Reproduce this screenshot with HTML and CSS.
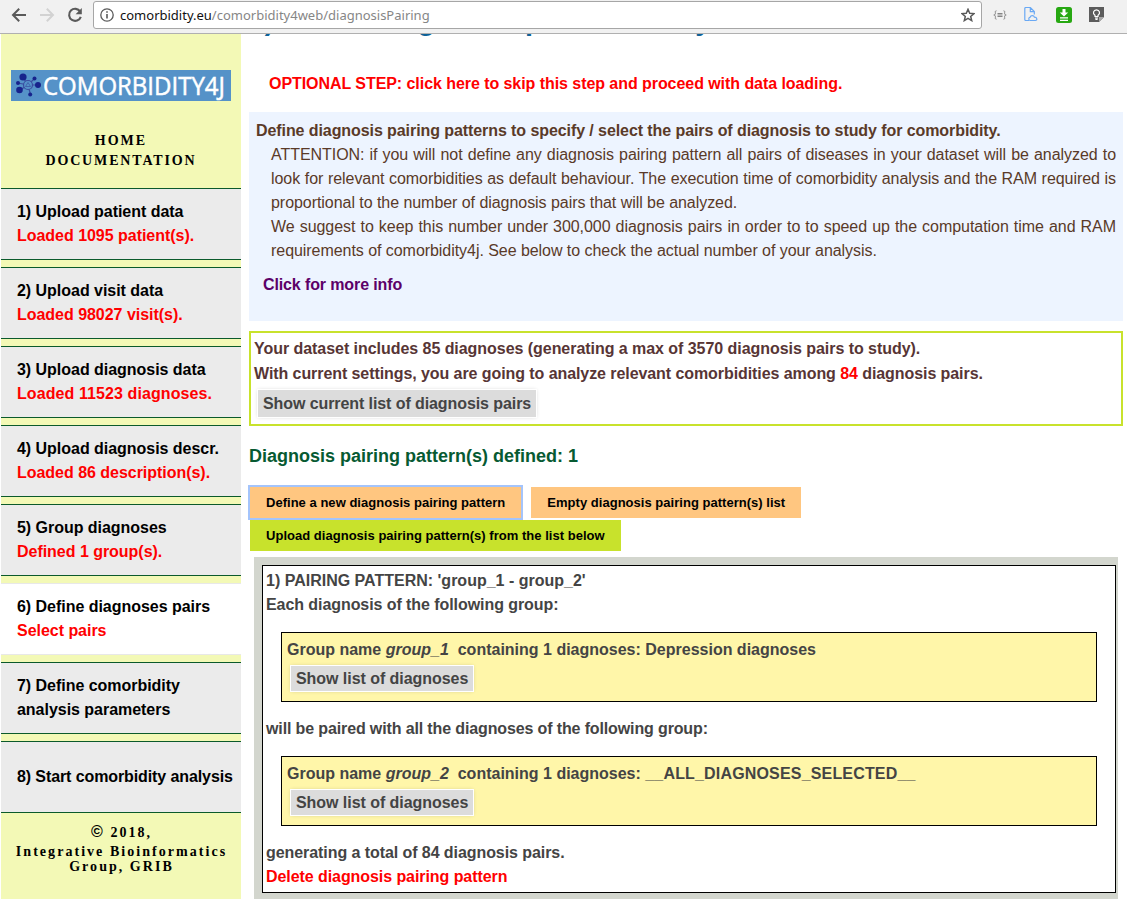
FILE: index.html
```html
<!DOCTYPE html>
<html lang="en">
<head>
<meta charset="utf-8">
<title>Comorbidity4j - Define diagnoses pairs</title>
<link rel="stylesheet" href="styles.css">
</head>
<body>
<header class="browser">
  <svg class="ico-back" width="16" height="16" viewBox="0 0 16 16"><path d="M15 8H2.5M8.2 1.8 2 8l6.200 6.200" fill="none" stroke="#5a5a5a" stroke-width="2"/></svg>
  <svg class="ico-fwd" width="16" height="16" viewBox="0 0 16 16"><path d="M1 8h12.500M7.800 1.800 14 8l-6.200 6.200" fill="none" stroke="#d2d2d2" stroke-width="2"/></svg>
  <svg class="ico-reload" width="16" height="16" viewBox="0 0 16 16"><path d="M13.200 4.600A6 6 0 1 0 13.800 9.800" fill="none" stroke="#5a5a5a" stroke-width="2.100"/><path d="M14.800 1v6.200H8.600z" fill="#5a5a5a"/></svg>
  <div class="address">
    <svg class="ico-info" width="14" height="14" viewBox="0 0 14 14"><circle cx="7" cy="7" r="6.200" fill="none" stroke="#5a5a5a" stroke-width="1.300"/><path d="M6.200 6h1.600v4.500H6.200zM6.200 3.300h1.600v1.500H6.200z" fill="#5a5a5a"/></svg>
    <span class="url"><span class="host">comorbidity.eu</span>/comorbidity4web/diagnosisPairing</span>
    <svg class="ico-star" width="14" height="14" viewBox="0 0 14 14"><path d="M7 1.300 8.700 5.200l4.200.4-3.200 2.800 1 4.200L7 10.400l-3.700 2.200 1-4.200L1.100 5.600l4.200-.4z" fill="none" stroke="#5a5a5a" stroke-width="1.500"/></svg>
  </div>
  <div class="extensions">
    <svg width="14" height="10" viewBox="0 0 14 10"><path d="M3.500.8C1.800.8 2.400 2 2.400 3.200S2 4.900.8 5c1.200.1 1.600.6 1.600 1.800S1.800 9.200 3.500 9.200M10.500.8c1.700 0 1.100 1.200 1.100 2.400s.4 1.700 1.600 1.800c-1.200.1-1.600.6-1.600 1.800s.6 2.400-1.100 2.400M4.500 3.500h5M4.500 5h5M4.500 6.500h5" fill="none" stroke="#858585" stroke-width="1"/></svg>
    <svg width="14" height="15" viewBox="0 0 14 15"><path d="M5 13.500H1.800a1 1 0 0 1-1-1v-11a1 1 0 0 1 1-1h4.500l4 4v3M6.300.8v3.800h3.900M6 13.500a1.700 1.700 0 0 1 .2-3.300c.5-2 3.600-2.200 4.200 0 2.800-.1 3.300 3.300 1 3.300z" fill="none" stroke="#6aa9f4" stroke-width="1.200"/></svg>
    <svg width="16" height="16" viewBox="0 0 16 16"><rect width="16" height="16" rx="2.500" fill="#27a812"/><path d="M6.500 2h3v3.500h2.700L8 9.500 3.800 5.500h2.700zM4 10.200h8v1.300H4zM4 12.700h8V14H4z" fill="#fff"/></svg>
    <svg width="15" height="15" viewBox="0 0 15 15"><path d="M0 0h15v10l-5 5H0z" fill="#5c5c5c"/><path d="M15 10h-5v5z" fill="#a8a8a8"/><path d="M6 8.300C3.200 6.500 4.500 2.800 7.500 2.800s4.300 3.700 1.500 5.500v1.200H6zM6 11h3M6.400 12.400h2.200" fill="none" stroke="#fff" stroke-width="1.200"/></svg>
  </div>
</header>
<div class="page">
  <nav class="sidebar">
    <div class="logo">
      <svg width="26" height="25" viewBox="0 0 26 25"><g stroke="#3a4da0" stroke-width="1.200" fill="none"><path d="M12 12 7 4.500M12 12 2 10M12 12l-8 5M12 12l2.500 9.500M12 12l10 0M12 12l6.500-6.500"/><circle cx="12" cy="12" r="4.500" fill="#5592c8"/><path d="M9.500 13.500 12 9.500l2.500 4z" stroke-width=".7"/></g><g fill="#17238c"><circle cx="7" cy="4" r="3.600"/><circle cx="2" cy="10" r="2"/><circle cx="3.500" cy="17" r="3.300"/><circle cx="14.200" cy="21.500" r="2"/><circle cx="22" cy="12" r="3"/><circle cx="18.500" cy="5.500" r="2"/></g></svg>
      <svg class="wordmark" width="184" height="31" viewBox="0 0 184 31"><text x="0" y="24.500" textLength="182" lengthAdjust="spacingAndGlyphs">COMORBIDITY4J</text></svg>
    </div>
    <div class="links"><a>HOME</a><a class="docs">DOCUMENTATION</a></div>
    <ol class="steps">
      <li>1) Upload patient data<b>Loaded 1095 patient(s).</b></li>
      <li>2) Upload visit data<b>Loaded 98027 visit(s).</b></li>
      <li>3) Upload diagnosis data<b class="wide">Loaded 11523 diagnoses.</b></li>
      <li>4) Upload diagnosis descr.<b>Loaded 86 description(s).</b></li>
      <li>5) Group diagnoses<b>Defined 1 group(s).</b></li>
      <li class="active">6) Define diagnoses pairs<b>Select pairs</b></li>
      <li>7) Define comorbidity<br>analysis parameters</li>
      <li class="single">8) Start comorbidity analysis</li>
    </ol>
    <footer class="credits"><p><span class="copy">©</span> 2018,</p><p class="org">Integrative Bioinformatics<br>Group, GRIB</p></footer>
  </nav>
  <main class="content">
    <h1>6) Define diagnoses pairs to study</h1>
    <a class="skip">OPTIONAL STEP: click here to skip this step and proceed with data loading.</a>
    <section class="intro">
      <h2>Define diagnosis pairing patterns to specify / select the pairs of diagnosis to study for comorbidity.</h2>
      <p>ATTENTION: if you will not define any diagnosis pairing pattern all pairs of diseases in your dataset will be analyzed to look for relevant comorbidities as default behaviour. The execution time of comorbidity analysis and the RAM required is proportional to the number of diagnosis pairs that will be analyzed.</p>
      <p>We suggest to keep this number under 300,000 diagnosis pairs in order to to speed up the computation time and RAM requirements of comorbidity4j. See below to check the actual number of your analysis.</p>
      <a class="more">Click for more info</a>
    </section>
    <section class="summary">
      <p>Your dataset includes 85 diagnoses (generating a max of 3570 diagnosis pairs to study).</p>
      <p class="tight">With current settings, you are going to analyze relevant comorbidities among <span class="red">84</span> diagnosis pairs.</p>
      <button class="toggle">Show current list of diagnosis pairs</button>
    </section>
    <h3>Diagnosis pairing pattern(s) defined: 1</h3>
    <div class="actions">
      <button class="btn focused">Define a new diagnosis pairing pattern</button>
      <button class="btn">Empty diagnosis pairing pattern(s) list</button>
      <button class="btn upload">Upload diagnosis pairing pattern(s) from the list below</button>
    </div>
    <section class="patterns">
      <article class="pattern">
        <p>1) PAIRING PATTERN: 'group_1 - group_2'</p>
        <p class="tight">Each diagnosis of the following group:</p>
        <div class="group"><p>Group name <i>group_1</i>&nbsp; containing 1 diagnoses: Depression diagnoses</p><button class="toggle">Show list of diagnoses</button></div>
        <p class="tighter">will be paired with all the diagnoses of the following group:</p>
        <div class="group"><p>Group name <i>group_2</i>&nbsp; containing 1 diagnoses: <span class="code">__ALL_DIAGNOSES_SELECTED__</span></p><button class="toggle">Show list of diagnoses</button></div>
        <p class="tight">generating a total of 84 diagnosis pairs.</p>
        <p class="red tight">Delete diagnosis pairing pattern</p>
      </article>
    </section>
  </main>
</div>
</body>
</html>
```
FILE: styles.css
```css
* { box-sizing: border-box; }
html, body { height: 899px; overflow: hidden; }
body { margin: 0; background: #fff; font: 16px/24px "Liberation Sans", Arial, sans-serif; color: #000; }
p, h1, h2, h3, ol { margin: 0; padding: 0; }
svg { display: block; flex: none; }
button { display: block; font-family: inherit; border: 0; margin: 0; }
.red { color: #f00; }
.tight { letter-spacing: -.07px; }
.tighter { letter-spacing: -.13px; }

.browser { display: flex; align-items: center; height: 34px; padding: 0 23px 4px 11px; background: #f1f1f1; border-bottom: 1px solid #b0b0b0; }
.ico-fwd { margin-left: 12px; }
.ico-reload { margin-left: 12px; }
.address { display: flex; align-items: center; width: 889px; height: 28px; margin: 1px 0 0 10px; padding: 0 6px; background: #fff; border: 1px solid #a6a6a6; border-radius: 3px; }
.url { margin-left: 6px; flex: 1; font: 13px/20px "Noto Sans", sans-serif; color: #868686; white-space: nowrap; }
.host { color: #111; }
.extensions { display: flex; align-items: center; justify-content: space-between; width: 111px; margin-left: 11px; }

.page { display: flex; height: 865px; padding-left: 1px; overflow: hidden; }
.sidebar { width: 240px; height: 865px; flex: none; background: #f3f9b6; }
.logo { display: flex; align-items: center; width: 220px; height: 31px; margin: 36px 10px 0; padding-left: 5px; background: #5592c8; }
.wordmark { margin-left: 1px; }
.wordmark text { font: 500 25.500px "Open Sans", "Noto Sans", sans-serif; fill: #fff; stroke: #fff; stroke-width: .5px; }
.links { display: flex; flex-direction: column; align-items: center; margin-top: 30px; font: bold 14px/20px "Liberation Serif", serif; letter-spacing: 2px; height: 57px; }
.docs { letter-spacing: 1.850px; }
.steps { list-style: none; font-weight: bold; letter-spacing: -.03px; }
.steps li { height: 72px; margin-bottom: 7px; padding: 11px 0 0 16px; background: #ebebeb; border-top: 1px solid #0b5a2b; border-bottom: 1px solid #0b5a2b; white-space: nowrap; }
.steps b { display: block; color: #f00; }
.steps .wide { letter-spacing: .09px; }
.steps .active { background: #fff; border-color: #e8e8e8; }
.steps .single { padding-top: 23px; margin-bottom: 0; letter-spacing: -.1px; }
.credits { padding: 10px 0 0 1px; text-align: center; font: bold 14px/20px "Liberation Serif", serif; letter-spacing: 2px; }
.copy { font: bold 16px/16px "Liberation Sans", sans-serif; }
.org { line-height: 15px; margin-top: 1px; letter-spacing: 2.040px; }

.content { flex: 1; min-width: 0; padding: 0 4px 0 8px; }
h1 { height: 38px; margin-top: -31px; font-size: 28.800px; line-height: 34px; letter-spacing: -.2px; color: #0e6298; }
.skip { display: block; margin: 31px 0 0 20px; font-weight: bold; letter-spacing: -.058px; color: #f00; }
.intro { height: 209px; margin-top: 16px; padding: 7px 7px 0; background: #edf4ff; color: #5a3a28; }
.intro h2 { font-size: 16px; line-height: 24px; letter-spacing: -.08px; white-space: nowrap; }
.intro p { margin-left: 15px; letter-spacing: -.05px; text-align: justify; }
.more { display: block; margin: 10px 0 0 7px; font-weight: bold; letter-spacing: -.12px; color: #5c0068; }
.summary { height: 95px; margin-top: 10px; padding: 3px; border: 2px solid #c8e22c; color: #573535; font-weight: bold; letter-spacing: -.045px; }
.summary p { line-height: 25px; }
.summary .tight { letter-spacing: -.075px; }
.toggle { margin: 4px 0 0 4px; padding: 0 5px; height: 27px; font-size: 16px; line-height: 27px; font-weight: bold; letter-spacing: -.085px; color: #444; background: #dcdcdc; box-shadow: 0 0 0 1px #fff, 0 0 4px rgba(0,0,0,.2); }
h3 { margin-top: 18px; font-size: 18px; line-height: 24px; color: #075a32; }
.actions { display: flex; flex-wrap: wrap; gap: 2px 10px; margin: 19px 0 0 1px; }
.btn { height: 31px; padding: 0 16px; font-size: 13px; line-height: 31px; font-weight: bold; letter-spacing: .025px; color: #000; background: #ffc680; }
.focused { box-shadow: 0 0 0 2px #a4c4fb; }
.upload { background: #c8e22c; }
.patterns { margin: 6px 5px 0; padding: 8px 2px 8px 8px; background: #d3d6ce; height: 400px; }
.pattern { height: 328px; padding: 3px; border: 1px solid #000; background: #fff; color: #444; font-weight: bold; }
.group { height: 70px; margin: 15px; padding: 5px; border: 1px solid #000; background: #fff6a9; }
.group .toggle { height: 25px; line-height: 25px; letter-spacing: -.05px; }
.code { letter-spacing: .17px; }
```
